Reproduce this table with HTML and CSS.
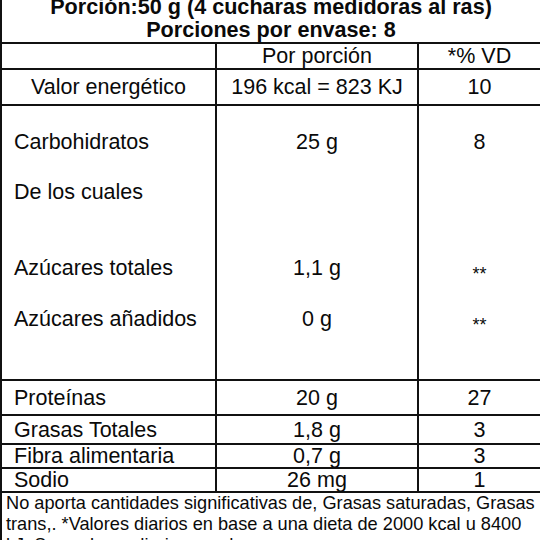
FILE: index.html
```html
<!DOCTYPE html>
<html lang="es">
<head>
<meta charset="utf-8">
<title>Información nutricional</title>
<link rel="stylesheet" href="styles.css">
</head>
<body>
<table class="nutri">
  <colgroup><col class="c1"><col class="c2"><col class="c3"></colgroup>
  <thead>
    <tr><th colspan="3" class="title">Porción:50 g (4 cucharas medidoras al ras)<br>Porciones por envase: 8</th></tr>
    <tr class="rule head"><td></td><td class="mid">Por porción</td><td class="mid">*% VD</td></tr>
  </thead>
  <tbody>
    <tr class="rule energy"><td class="mid">Valor energético</td><td class="mid">196 kcal = 823 KJ</td><td class="mid">10</td></tr>
    <tr class="rule sub s1"><td class="name">Carbohidratos</td><td class="mid">25 g</td><td class="mid">8</td></tr>
    <tr class="sub s2"><td class="name">De los cuales</td><td class="mid"></td><td class="mid"></td></tr>
    <tr class="sub s3"><td class="name">Azúcares totales</td><td class="mid">1,1 g</td><td class="mid na">**</td></tr>
    <tr class="sub s4"><td class="name">Azúcares añadidos</td><td class="mid">0 g</td><td class="mid na">**</td></tr>
    <tr class="rule r-prot"><td class="name">Proteínas</td><td class="mid">20 g</td><td class="mid">27</td></tr>
    <tr class="rule r-gras"><td class="name">Grasas Totales</td><td class="mid">1,8 g</td><td class="mid">3</td></tr>
    <tr class="rule r-fib"><td class="name">Fibra alimentaria</td><td class="mid">0,7 g</td><td class="mid">3</td></tr>
    <tr class="rule r-sod"><td class="name">Sodio</td><td class="mid">26 mg</td><td class="mid">1</td></tr>
    <tr class="rule foot"><td colspan="3">No aporta cantidades significativas de, Grasas saturadas, Grasas trans,. *Valores diarios en base a una dieta de 2000 kcal u 8400 kJ. Sus valores diarios pueden ser mayores o menores dependiendo de sus necesidades energéticas.</td></tr>
  </tbody>
</table>
</body>
</html>
```
FILE: styles.css
```css
html, body {
  margin: 0;
  padding: 0;
  background: #fff;
}

body {
  font-family: "Liberation Sans", Arial, sans-serif;
  color: #0a0a0a;
  overflow: hidden;
}

.nutri {
  width: 540px;
  margin-top: -8px;
  border-collapse: collapse;
  table-layout: fixed;
  border: 2px solid #111;
}

.c1 { width: 215px; }
.c2 { width: 202px; }
.c3 { width: 123px; }

.nutri td,
.nutri th {
  padding: 0;
  border-left: 2px solid #111;
  border-right: 2px solid #111;
  font-size: 21.5px;
  font-weight: normal;
  line-height: 24px;
  vertical-align: middle;
}

.nutri tr.rule td {
  border-top: 2px solid #111;
}

.title {
  font-weight: bold !important;
  font-size: 21.6px !important;
  line-height: 23px !important;
  text-align: center;
  padding: 1px 0 1px !important;
}

.mid { text-align: center; }
.name { padding-left: 12px !important; }

.head td { height: 24px; }
.energy td { height: 34px; }

.sub td { vertical-align: top; }
.s1 td { padding-top: 24px !important; }
.s2 td { padding-top: 26px !important; }
.s3 td { padding-top: 52px !important; }
.s4 td { padding-top: 27px !important; padding-bottom: 48px !important; }

.nutri td.na {
  font-size: 18px;
  line-height: 11px;
}
.s3 td.na { padding-top: 65px !important; }
.s4 td.na { padding-top: 40px !important; }

.r-prot td { height: 33px; }
.r-gras td { height: 27px; }
.nutri .r-fib td,
.nutri .r-sod td {
  height: 22px;
  line-height: 21px;
}

.nutri .foot td {
  font-size: 18.2px;
  line-height: 21px;
  padding: 0 2px 0 4px;
}
```
